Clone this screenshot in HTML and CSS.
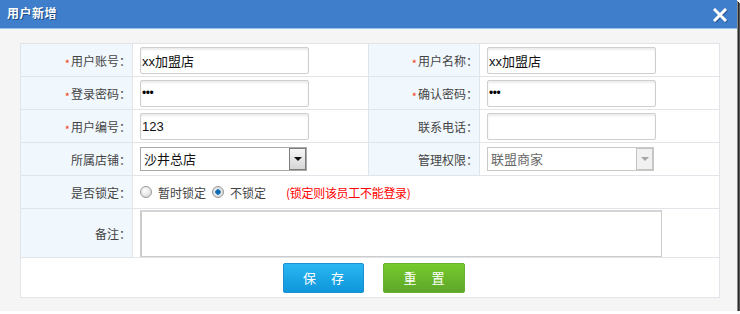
FILE: index.html
```html
<!DOCTYPE html>
<html lang="zh-CN">
<head>
<meta charset="utf-8">
<title>用户新增</title>
<link rel="stylesheet" href="styles.css">
</head>
<body>
<div class="dialog">
  <div class="dialog-head">
    <span class="dialog-title">用户新增</span>
    <span class="dialog-close">
      <svg width="14" height="14" viewBox="0 0 14 14"><path d="M2 2 L12 12 M12 2 L2 12" stroke="#fff" stroke-width="3" stroke-linecap="square" fill="none"/></svg>
    </span>
  </div>
  <div class="dialog-body">
    <table class="form">
      <colgroup><col class="c1"><col class="c2"><col class="c3"><col class="c4"></colgroup>
      <tr class="row">
        <td class="lbl"><i class="req">*</i>用户账号：</td>
        <td class="fld"><input class="txt" type="text" value="xx加盟店"></td>
        <td class="lbl"><i class="req">*</i>用户名称：</td>
        <td class="fld"><input class="txt" type="text" value="xx加盟店"></td>
      </tr>
      <tr class="row">
        <td class="lbl"><i class="req">*</i>登录密码：</td>
        <td class="fld"><input class="txt pwd" type="password" value="123"></td>
        <td class="lbl"><i class="req">*</i>确认密码：</td>
        <td class="fld"><input class="txt pwd" type="password" value="123"></td>
      </tr>
      <tr class="row">
        <td class="lbl"><i class="req">*</i>用户编号：</td>
        <td class="fld"><input class="txt" type="text" value="123"></td>
        <td class="lbl">联系电话：</td>
        <td class="fld"><input class="txt" type="text" value=""></td>
      </tr>
      <tr class="row">
        <td class="lbl">所属店铺：</td>
        <td class="fld">
          <div class="sel"><span class="sel-text">沙井总店</span><span class="sel-btn"><span class="tri"></span></span></div>
        </td>
        <td class="lbl">管理权限：</td>
        <td class="fld">
          <div class="sel sel-dis"><span class="sel-text">联盟商家</span><span class="sel-btn"><span class="tri"></span></span></div>
        </td>
      </tr>
      <tr class="row">
        <td class="lbl">是否锁定：</td>
        <td class="fld" colspan="3">
          <div class="radios">
            <label class="radio"><input type="radio" name="lock"><span>暂时锁定</span></label>
            <label class="radio"><input type="radio" name="lock" checked><span>不锁定</span></label>
            <span class="warn">(锁定则该员工不能登录)</span>
          </div>
        </td>
      </tr>
      <tr class="row-note">
        <td class="lbl">备注：</td>
        <td class="fld" colspan="3"><textarea class="note"></textarea></td>
      </tr>
      <tr class="row-btn">
        <td colspan="4">
          <div class="btns">
            <button class="btn btn-save" type="button">保 存</button>
            <button class="btn btn-reset" type="button">重 置</button>
          </div>
        </td>
      </tr>
    </table>
  </div>
</div>
</body>
</html>
```
FILE: styles.css
```css
html, body {
  margin: 0;
  padding: 0;
  background: #ffffff;
}
body {
  font-family: "Liberation Sans", "Noto Sans CJK SC", sans-serif;
  font-size: 12px;
  color: #444;
}
.dialog {
  width: 737px;
  height: 311px;
  background: #f5f5f5;
  box-shadow: 1px 1px 0 #888, 2px 2px 0 #2b2b2b, 3px 3px 0 #555;
  display: flex;
  flex-direction: column;
}
.dialog-head {
  height: 28px;
  background: #3f7ecb;
  border-bottom: 1px solid #9cc1ea;
  display: flex;
  align-items: center;
  justify-content: space-between;
  padding: 0 10px 0 7px;
}
.dialog-title {
  color: #fff;
  font-weight: bold;
  font-size: 12px;
  letter-spacing: 0.5px;
  text-shadow: 1px 1px 0 #1d4c86;
  line-height: 16px;
}
.dialog-close {
  display: flex;
  filter: drop-shadow(1px 1px 0 #2b5b98);
  margin-top: 1px;
}
.dialog-body {
  padding: 14px 19px 0 20px;
}
.form {
  border-collapse: collapse;
  table-layout: fixed;
  width: 699px;
  background: #fff;
}
.form td {
  border: 1px solid #e1e4e8;
  padding: 0;
}
.c1 { width: 112px; }
.c2 { width: 236px; }
.c3 { width: 111px; }
.c4 { width: 240px; }
.row td { height: 32px; }
.row-note td { height: 48px; }
.row-btn td { height: 39px; }
.lbl {
  background: #f0f7fd;
  text-align: right;
  padding-right: 1px !important;
  color: #444;
  white-space: nowrap;
  font-family: "Noto Sans CJK SC", sans-serif;
}
.req {
  font-style: normal;
  color: #f0441c;
  font-size: 11px;
  margin-right: 1px;
  position: relative;
  top: 2px;
}
.fld {
  padding-left: 7px !important;
}
.txt {
  box-sizing: border-box;
  width: 169px;
  height: 27px;
  border: 1px solid #cfcfcf;
  border-radius: 2px;
  box-shadow: inset 0 2px 2px #ececec;
  padding: 0 0 0 1px;
  font-family: "Liberation Sans", "Noto Sans CJK SC", sans-serif;
  font-size: 13px;
  color: #111;
  background: #fff;
  outline: none;
  display: block;
}
.pwd {
  font-size: 12px;
  letter-spacing: -0.5px;
  color: #000;
}
.sel {
  box-sizing: border-box;
  width: 167px;
  height: 24px;
  border: 1px solid #a9a9a9;
  display: flex;
  align-items: stretch;
  background: #fff;
}
.sel-text {
  flex: 1;
  padding-left: 3px;
  line-height: 22px;
  font-family: "Noto Sans CJK SC", sans-serif;
  font-size: 13px;
  color: #111;
}
.sel-btn {
  width: 15px;
  border: 1px solid #7d7d7d;
  background: linear-gradient(#f7f7f7, #d6d6d6);
  display: flex;
  align-items: center;
  justify-content: center;
}
.tri {
  width: 0;
  height: 0;
  border-left: 4px solid transparent;
  border-right: 4px solid transparent;
  border-top: 4px solid #111;
}
.sel-dis {
  border-color: #c9c9c9;
}
.sel-dis .sel-text {
  color: #6a6a6a;
}
.sel-dis .sel-btn {
  border-color: #c4c4c4;
  background: #f1f1f1;
}
.sel-dis .tri {
  border-top-color: #a6a6a6;
}
.radios {
  display: flex;
  align-items: center;
  height: 100%;
}
.radio {
  display: flex;
  align-items: center;
  margin-right: 6px;
  font-family: "Noto Sans CJK SC", sans-serif;
  font-size: 12px;
  color: #444;
}
.radio input {
  appearance: none;
  -webkit-appearance: none;
  width: 12px;
  height: 12px;
  margin: 0 6px 0 0;
  border-radius: 50%;
  border: 1px solid #9a9a9a;
  background: radial-gradient(circle at 40% 35%, #ffffff 0%, #e6e6e6 55%, #c9c9c9 100%);
  box-sizing: border-box;
}
.radio input:checked {
  background: radial-gradient(circle at 50% 50%, #0c5a9a 0, #1d7cc4 2.5px, #e8e8e8 3px, #d0d0d0 100%);
}
.warn {
  color: #f00;
  margin-left: 14px;
  font-family: "Noto Sans CJK SC", sans-serif;
  font-size: 12px;
  letter-spacing: -0.3px;
}
.note {
  box-sizing: border-box;
  display: block;
  width: 522px;
  height: 47px;
  border: 1px solid #cccccc;
  border-top-width: 2px;
  border-left-width: 2px;
  border-top-color: #d4d4d4;
  resize: none;
  outline: none;
  margin-top: 0;
}
.btns {
  display: flex;
  justify-content: center;
  gap: 19px;
  padding-left: 8px;
}
.btn {
  width: 82px;
  height: 30px;
  border-radius: 2px;
  color: #fff;
  font-family: "Noto Sans CJK SC", sans-serif;
  font-size: 13px;
  letter-spacing: 6px;
  padding: 0 0 0 6px;
  cursor: pointer;
}
.btn-save {
  width: 81px;
  border: 1px solid #1b8fd2;
  background: linear-gradient(#2ab6f2, #0e96da);
}
.btn-reset {
  border: 1px solid #67b22c;
  background: linear-gradient(#76cb2d, #5ea62a);
}
```
